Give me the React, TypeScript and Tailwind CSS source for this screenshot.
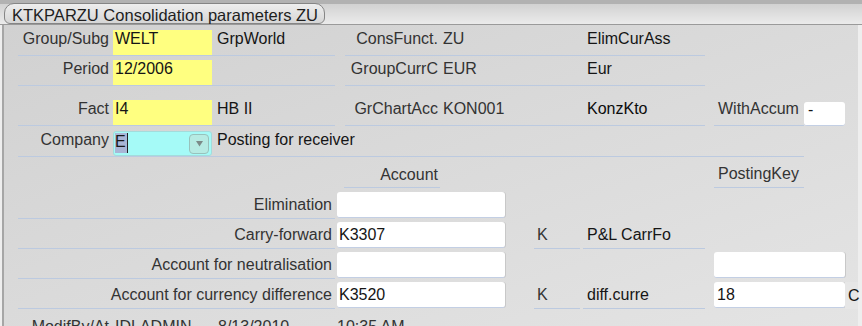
import React from "react";

const uline = "border-b border-[#bccae0]";
const label = "text-[#333333]";
const value = "text-[#151515]";

type CellProps = {
  w: string;
  className?: string;
  children?: React.ReactNode;
};

// top-aligned cells used in the header block (rows 1-4)
function Top({ w, className = "", children }: CellProps) {
  return (
    <div className={`${w} h-[26px] shrink-0 pt-[2px] leading-[14px] whitespace-nowrap ${className}`}>
      {children}
    </div>
  );
}

// vertically centred cells used in the account block
function Mid({ w, className = "", children }: CellProps) {
  return (
    <div className={`${w} h-[27px] shrink-0 flex items-center leading-[18px] whitespace-nowrap ${className}`}>
      {children}
    </div>
  );
}

function WhiteBox({ w, text, pad = "pl-[2px]" }: { w: string; text?: string; pad?: string }) {
  return (
    <div className={`${w} h-[27px] shrink-0 pb-px`}>
      <div className={`h-full rounded-[3px] bg-white border-b border-[#c3cfe4] shadow-[1px_0_0_#c8c8c8] flex items-center leading-[18px] ${pad} ${value}`}>
        {text}
      </div>
    </div>
  );
}

function Gap({ w }: { w: string }) {
  return <div className={`${w} shrink-0`} />;
}

function AccountRow({
  name,
  account,
  k,
  desc,
  keyBox,
  keyText,
  extra,
}: {
  name: string;
  account?: string;
  k?: string;
  desc?: string;
  keyBox?: boolean;
  keyText?: string;
  extra?: boolean;
}) {
  return (
    <div className="flex">
      <Mid w="w-[317px]" className={`justify-end pr-[3px] ${uline} ${label}`}>
        {name}
      </Mid>
      <Gap w="w-[2px]" />
      <WhiteBox w="w-[168px]" text={account} />
      <Gap w="w-[29px]" />
      <Mid w="w-[46px]" className={`pl-[3px] ${k ? uline : ""} ${label}`}>
        {k}
      </Mid>
      <Gap w="w-[3px]" />
      <Mid w="w-[122px]" className={`pl-[4px] ${desc ? uline : ""} ${value}`}>
        {desc}
      </Mid>
      <Gap w="w-[9px]" />
      {keyBox ? <WhiteBox w="w-[131px]" text={keyText} pad="pl-[3px]" /> : <Gap w="w-[131px]" />}
      {extra && (
        <Mid w="w-[13px]" className={`pl-[3px] bg-[#e6e6e6] ${value}`}>
          C
        </Mid>
      )}
    </div>
  );
}

export default function App() {
  return (
    <div className="w-[862px] h-[326px] overflow-hidden bg-[#eeeeee] font-['Liberation_Sans',Arial,sans-serif] text-[16px]">
      <div className="h-[4px] bg-[#b2b2b2]" />
      <div className="h-[21px] flex items-end border-b border-[#9a9a9a] bg-linear-to-b from-[#d2d2d2] to-[#ebebeb] pl-[4px]">
        <div className="h-[21px] w-[321px] rounded-t-[10px] rounded-b-[6px] border border-[#858585] bg-linear-to-b from-[#eeeeee] to-[#d6d6d6] pl-[7px] pt-[2px] leading-[18px] text-[16.5px] text-[#1e1e1e] whitespace-nowrap">
          KTKPARZU Consolidation parameters ZU
        </div>
      </div>

      <div className="ml-[2px] w-[856px] h-[301px] border-l-2 border-[#a6a6a6] bg-linear-to-br from-[#d1d1d1] to-[#e4e4e4] pl-[14px] pt-[5px] flex flex-col">
        {/* Group/Subg */}
        <div className="flex">
          <Top w="w-[95px]" className={`text-right pr-[4px] ${uline} ${label}`}>Group/Subg</Top>
          <Top w="w-[99px]" className={`bg-[#ffff80] pl-[2px] ${uline} ${value}`}>WELT</Top>
          <Top w="w-[123px]" className={`pl-[5px] ${uline} ${value}`}>GrpWorld</Top>
          <Gap w="w-[10px]" />
          <Top w="w-[95px]" className={`text-right pr-[2px] ${uline} ${label}`}>ConsFunct.</Top>
          <Top w="w-[143px]" className={`pl-[3px] ${uline} ${label}`}>ZU</Top>
          <Top w="w-[122px]" className={`pl-[4px] ${uline} ${value}`}>ElimCurAss</Top>
        </div>

        {/* Period */}
        <div className="flex mt-[4px]">
          <Top w="w-[95px]" className={`text-right pr-[4px] ${uline} ${label}`}>Period</Top>
          <Top w="w-[99px]" className={`bg-[#ffff80] pl-[2px] ${uline} ${value}`}>12/2006</Top>
          <Top w="w-[123px]" className={uline} />
          <Gap w="w-[10px]" />
          <Top w="w-[95px]" className={`text-right pr-[2px] ${uline} ${label}`}>GroupCurrC</Top>
          <Top w="w-[143px]" className={`pl-[3px] ${uline} ${label}`}>EUR</Top>
          <Top w="w-[122px]" className={`pl-[4px] ${uline} ${value}`}>Eur</Top>
        </div>

        {/* Fact */}
        <div className="flex mt-[14px]">
          <Top w="w-[95px]" className={`text-right pr-[4px] ${uline} ${label}`}>Fact</Top>
          <Top w="w-[99px]" className={`bg-[#ffff80] pl-[2px] ${uline} ${value}`}>I4</Top>
          <Top w="w-[123px]" className={`pl-[5px] ${uline} ${value}`}>HB II</Top>
          <Gap w="w-[10px]" />
          <Top w="w-[95px]" className={`text-right pr-[2px] ${uline} ${label}`}>GrChartAcc</Top>
          <Top w="w-[143px]" className={`pl-[3px] ${uline} ${label}`}>KON001</Top>
          <Top w="w-[122px]" className={`pl-[4px] ${uline} text-[#0c0c0c]`}>KonzKto</Top>
          <Gap w="w-[9px]" />
          <Top w="w-[90px]" className={`pl-[4px] ${uline} ${label}`}>WithAccum</Top>
          <div className="w-[41px] h-[24px] mt-[2px] shrink-0 rounded-[3px] bg-white border-b border-[#c3cfe4] pl-[4px] leading-[14px] pt-[1px] text-[#151515]">
            -
          </div>
        </div>

        {/* Company */}
        <div className="flex mt-[5px]">
          <Top w="w-[95px]" className={`text-right pr-[4px] ${uline} ${label}`}>Company</Top>
          <div className={`w-[99px] h-[26px] shrink-0 ${uline}`}>
            <div className="h-[25px] rounded-[3px] border border-[#a3dcdc] bg-[#a5faf7] flex items-start pl-[1px] pt-px">
              <span className="h-[20px] w-[12px] bg-[#a9b6d6] leading-[14px] pt-[2px] text-[#1a1a1a]">E</span>
              <span className="h-[20px] w-px bg-[#222222]" />
              <span className="ml-auto mr-[2px] mt-px w-[20px] h-[20px] rounded-[4px] border border-[#98c2bc] bg-[#b6ebe3] flex items-center justify-center">
                <svg width="7" height="6" viewBox="0 0 7 6">
                  <path d="M0 0 H7 L3.5 5.5 Z" fill="#7c8a88" />
                </svg>
              </span>
            </div>
          </div>
          <Top w="w-[592px]" className={`pl-[5px] ${uline} ${value}`}>Posting for receiver</Top>
        </div>

        {/* column headers */}
        <div className="flex mt-[6px]">
          <Gap w="w-[326px]" />
          <div className={`w-[96px] h-[25px] shrink-0 pt-[5px] leading-[14px] text-right pr-[2px] ${uline} ${label}`}>Account</div>
          <Gap w="w-[274px]" />
          <div className={`w-[90px] h-[25px] shrink-0 pt-[4px] leading-[14px] pl-[4px] ${uline} ${label}`}>PostingKey</div>
        </div>

        <div className="flex flex-col gap-[3px] mt-[4px]">
          <AccountRow name="Elimination" />
          <AccountRow name="Carry-forward" account="K3307" k="K" desc="P&L CarrFo" />
          <AccountRow name="Account for neutralisation" keyBox />
          <AccountRow name="Account for currency difference" account="K3520" k="K" desc="diff.curre" keyBox keyText="18" extra />
        </div>

        {/* modified by */}
        <div className="flex mt-[4px]">
          <Mid w="w-[95px]" className={`justify-end pr-[4px] ${label}`}>ModifBy/At</Mid>
          <Mid w="w-[105px]" className={`pl-[2px] ${label}`}>IDLADMIN</Mid>
          <Mid w="w-[119px]" className={label}>8/13/2010</Mid>
          <Mid w="w-[120px]" className={label}>10:35 AM</Mid>
        </div>
      </div>
    </div>
  );
}
